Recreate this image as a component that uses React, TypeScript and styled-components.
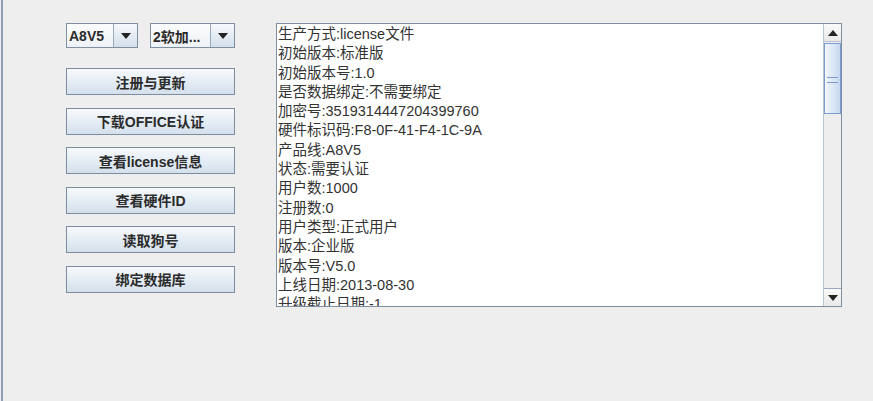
import styled, { createGlobalStyle } from "styled-components";

const GlobalStyle = createGlobalStyle`
  html, body {
    margin: 0;
    padding: 0;
    background: #eeeeee;
  }
  body {
    font-family: "Liberation Sans", "Noto Sans CJK SC", sans-serif;
  }
`;

const lines = [
  "生产方式:license文件",
  "初始版本:标准版",
  "初始版本号:1.0",
  "是否数据绑定:不需要绑定",
  "加密号:3519314447204399760",
  "硬件标识码:F8-0F-41-F4-1C-9A",
  "产品线:A8V5",
  "状态:需要认证",
  "用户数:1000",
  "注册数:0",
  "用户类型:正式用户",
  "版本:企业版",
  "版本号:V5.0",
  "上线日期:2013-08-30",
  "升级截止日期:-1",
];

const actions = [
  "注册与更新",
  "下载OFFICE认证",
  "查看license信息",
  "查看硬件ID",
  "读取狗号",
  "绑定数据库",
];

const Caret = ({ up }: { up?: boolean }) => (
  <svg width="10" height="6" viewBox="0 0 10 6">
    <path d={up ? "M0 6 L5 0 L10 6 Z" : "M0 0 L10 0 L5 6 Z"} fill="#222" />
  </svg>
);

export default function App() {
  return (
    <>
      <GlobalStyle />
      <Frame>
        <LeftColumn>
          <ComboRow>
            <Combo $width={72}>
              <ComboValue>A8V5</ComboValue>
              <ComboArrow>
                <Caret />
              </ComboArrow>
            </Combo>
            <Combo $width={85}>
              <ComboValue>2软加...</ComboValue>
              <ComboArrow>
                <Caret />
              </ComboArrow>
            </Combo>
          </ComboRow>
          <ButtonStack>
            {actions.map((label) => (
              <ActionButton key={label}>{label}</ActionButton>
            ))}
          </ButtonStack>
        </LeftColumn>
        <InfoPane>
          <InfoText>
            {lines.map((line) => (
              <Line key={line}>{line}</Line>
            ))}
          </InfoText>
          <ScrollBar>
            <ArrowButton>
              <Caret up />
            </ArrowButton>
            <Track>
              <Thumb>
                <Grip />
              </Thumb>
            </Track>
            <ArrowButton>
              <Caret />
            </ArrowButton>
          </ScrollBar>
        </InfoPane>
      </Frame>
    </>
  );
}

const Frame = styled.div`
  box-sizing: border-box;
  width: 873px;
  height: 401px;
  margin-left: 1px;
  border-left: 2px solid #8d9db2;
  display: flex;
  align-items: flex-start;
  padding: 23px 0 0 63px;
  gap: 41px;
  background: #eeeeee;
  overflow: hidden;
`;

const LeftColumn = styled.div`
  display: flex;
  flex-direction: column;
  width: 169px;
`;

const ComboRow = styled.div`
  display: flex;
  gap: 12px;
  height: 25px;
`;

const Combo = styled.div<{ $width: number }>`
  box-sizing: border-box;
  width: ${(p) => p.$width}px;
  height: 25px;
  display: flex;
  border: 1px solid #7f8fa2;
  background: linear-gradient(#fbfcfd, #eef2f6);
`;

const ComboValue = styled.div`
  flex: 1;
  display: flex;
  align-items: center;
  padding-left: 2px;
  font-size: 14px;
  font-weight: bold;
  color: #2b2b2b;
  white-space: nowrap;
  overflow: hidden;
`;

const ComboArrow = styled.div`
  width: 23px;
  display: flex;
  align-items: center;
  justify-content: center;
  border-left: 1px solid #9aa9bb;
  background: linear-gradient(#f6f9fc, #d3dfeb);
`;

const ButtonStack = styled.div`
  display: flex;
  flex-direction: column;
  gap: 12.6px;
  margin-top: 20px;
`;

const ActionButton = styled.button`
  box-sizing: border-box;
  height: 27px;
  width: 169px;
  padding: 0;
  border: 1px solid #7d8c9e;
  background: linear-gradient(#f7f9fc 0%, #e5edf5 50%, #d4e0ec 100%);
  font-family: "Liberation Sans", "Noto Sans CJK SC", sans-serif;
  font-size: 14px;
  font-weight: bold;
  color: #2b2b2b;
  cursor: default;
`;

const InfoPane = styled.div`
  box-sizing: border-box;
  width: 566px;
  height: 284px;
  display: flex;
  border: 1px solid #7f8fa2;
  background: #ffffff;
`;

const InfoText = styled.div`
  flex: 1;
  overflow: hidden;
  padding: 1px 0 0 1px;
`;

const Line = styled.div`
  height: 19.3px;
  line-height: 19.3px;
  font-size: 14.5px;
  color: #333;
  white-space: nowrap;
`;

const ScrollBar = styled.div`
  width: 17px;
  display: flex;
  flex-direction: column;
  border-left: 1px solid #b8c4d2;
  background: #eeeeee;
`;

const ArrowButton = styled.div`
  box-sizing: border-box;
  height: 18px;
  display: flex;
  align-items: center;
  justify-content: center;
  background: linear-gradient(#fafafa, #e8e8e8);
  border-bottom: 1px solid #b8c4d2;
  &:last-child {
    border-bottom: none;
    border-top: 1px solid #9aa9bb;
  }
`;

const Track = styled.div`
  flex: 1;
  padding-top: 1px;
`;

const Thumb = styled.div`
  box-sizing: border-box;
  height: 71px;
  border: 1px solid #7b9bd2;
  background: linear-gradient(90deg, #f4f8fd 0%, #dfeaf7 45%, #c6d8ef 100%);
  display: flex;
  align-items: center;
  justify-content: center;
`;

const Grip = styled.div`
  width: 11px;
  height: 4px;
  border-top: 1px solid #7b9bd2;
  border-bottom: 1px solid #7b9bd2;
  margin-top: 3px;
`;
